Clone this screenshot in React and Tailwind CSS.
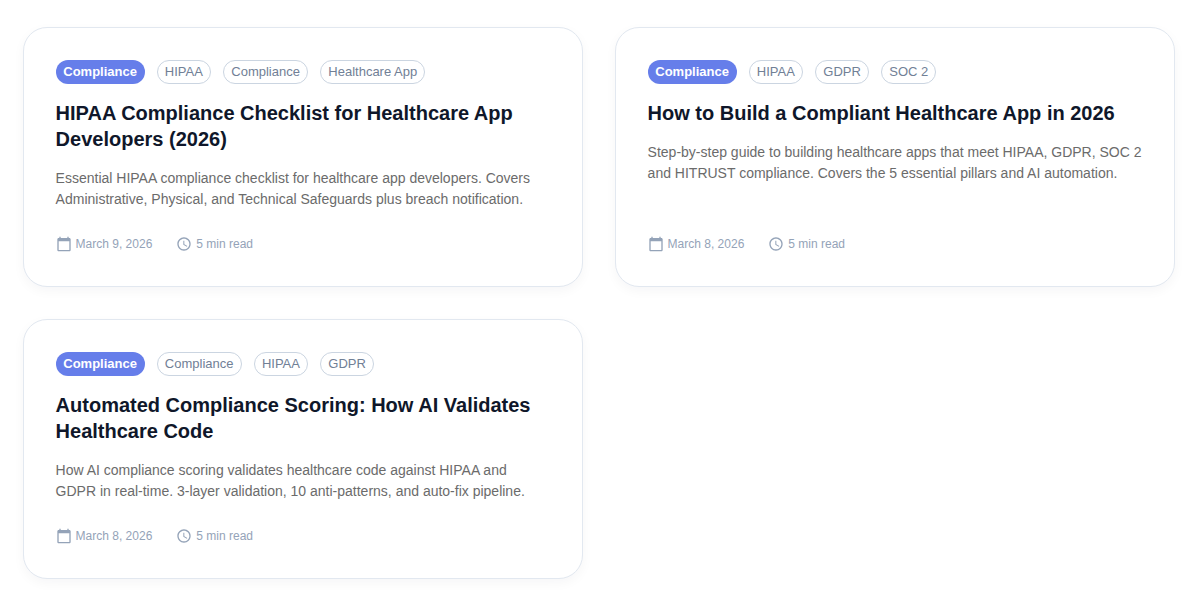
const posts = [
  {
    tags: ["HIPAA", "Compliance", "Healthcare App"],
    title: "HIPAA Compliance Checklist for Healthcare App Developers (2026)",
    text: "Essential HIPAA compliance checklist for healthcare app developers. Covers Administrative, Physical, and Technical Safeguards plus breach notification.",
    date: "March 9, 2026",
  },
  {
    tags: ["HIPAA", "GDPR", "SOC 2"],
    title: "How to Build a Compliant Healthcare App in 2026",
    text: "Step-by-step guide to building healthcare apps that meet HIPAA, GDPR, SOC 2 and HITRUST compliance. Covers the 5 essential pillars and AI automation.",
    date: "March 8, 2026",
  },
  {
    tags: ["Compliance", "HIPAA", "GDPR"],
    title: "Automated Compliance Scoring: How AI Validates Healthcare Code",
    text: "How AI compliance scoring validates healthcare code against HIPAA and GDPR in real-time. 3-layer validation, 10 anti-patterns, and auto-fix pipeline.",
    date: "March 8, 2026",
  },
];

function CalendarIcon() {
  return (
    <svg width="16" height="16" viewBox="0 0 24 24" fill="#94a3b8" className="shrink-0">
      <path d="M20 3h-1V1h-2v2H7V1H5v2H4c-1.1 0-2 .9-2 2v16c0 1.1.9 2 2 2h16c1.1 0 2-.9 2-2V5c0-1.1-.9-2-2-2zm0 18H4V8h16v13z" />
    </svg>
  );
}

function ClockIcon() {
  return (
    <svg width="16" height="16" viewBox="0 0 24 24" fill="#94a3b8" className="shrink-0">
      <path d="M11.99 2C6.47 2 2 6.48 2 12s4.47 10 9.99 10C17.52 22 22 17.52 22 12S17.52 2 11.99 2zM12 20c-4.42 0-8-3.58-8-8s3.58-8 8-8 8 3.58 8 8-3.58 8-8 8zm.5-13H11v6l5.25 3.15.75-1.23-4.5-2.67z" />
    </svg>
  );
}

function PostCard({ post }) {
  return (
    <div className="flex h-[260px] flex-col rounded-[24px] border border-[#e2e8f0] bg-white px-8 pt-8 shadow-[0_4px_12px_rgba(15,23,42,0.04)]">
      <div className="flex gap-3">
        <span className="flex h-6 items-center rounded-full bg-[#667eea] px-[7.7px] text-[13px] font-semibold text-white">
          Compliance
        </span>
        {post.tags.map((tag, i) => (
          <span key={i} className="flex h-6 items-center rounded-full border border-[#cbd5e1] px-[7.2px] text-[13px] text-[#718096]">
            {tag}
          </span>
        ))}
      </div>
      <h3 className="mt-[16px] text-[20px] leading-[26px] font-bold text-[#0f172a]">{post.title}</h3>
      <p className="mt-4 text-[14px] leading-[21px] text-[#6b6b6b]">{post.text}</p>
      <div className="mt-auto mb-[33px] flex items-center gap-6 text-[12px] text-[#94a3b8]">
        <span className="flex items-center gap-1">
          <CalendarIcon />
          {post.date}
        </span>
        <span className="flex items-center gap-1">
          <ClockIcon />
          5 min read
        </span>
      </div>
    </div>
  );
}

export default function App() {
  return (
    <div className="min-h-[613px] bg-white font-['Liberation_Sans',Arial,sans-serif]">
      <div className="grid grid-cols-[560px_560px] gap-8 px-[22.6px] pt-[27px]">
        {posts.map((post, i) => (
          <PostCard key={i} post={post} />
        ))}
      </div>
    </div>
  );
}
